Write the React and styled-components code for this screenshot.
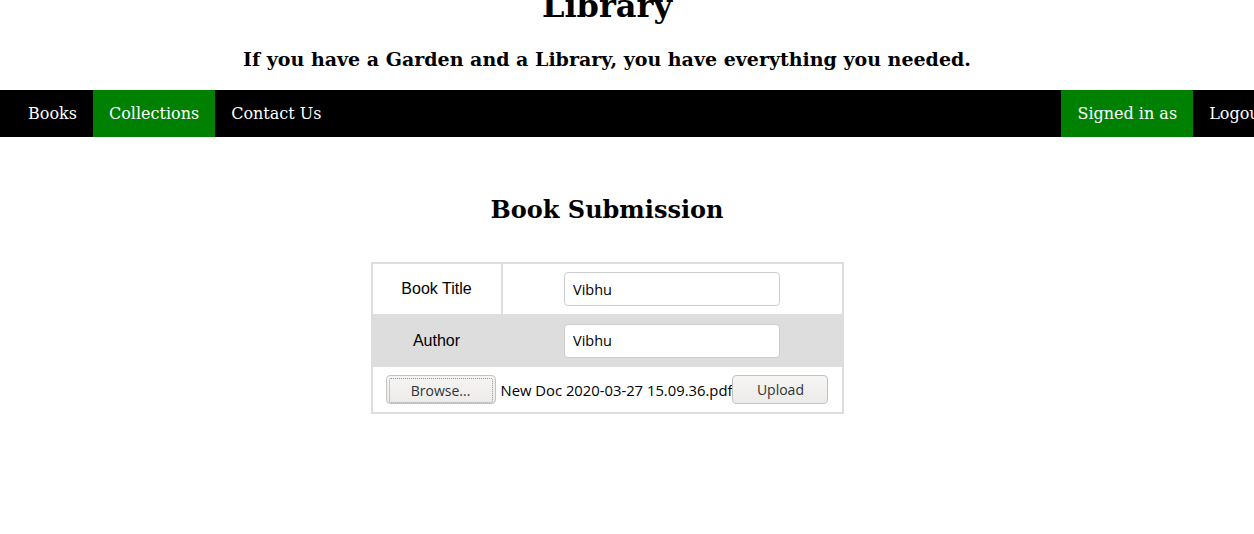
import styled, { createGlobalStyle } from 'styled-components'

const GlobalStyle = createGlobalStyle`
  html, body {
    margin: 0;
    padding: 0;
    background: #fff;
    overflow: hidden;
  }
  body {
    font-family: "DejaVu Serif", serif;
    color: #000;
  }
`;

const App = () => {
    return (
        <>
            <GlobalStyle />
            <Header>
                <Title>Library</Title>
                <Tagline>If you have a Garden and a Library, you have everything you needed.</Tagline>
            </Header>

            <NavBar>
                <NavGroup>
                    <NavItem>Books</NavItem>
                    <NavItem active>Collections</NavItem>
                    <NavItem>Contact Us</NavItem>
                </NavGroup>
                <NavGroup right>
                    <NavItem active>Signed in as</NavItem>
                    <NavItem>Logout</NavItem>
                </NavGroup>
            </NavBar>

            <Main>
                <Heading>Book Submission</Heading>
                <FormTable>
                    <tbody>
                        <Row height={50}>
                            <LabelCell divider>Book Title</LabelCell>
                            <InputCell>
                                <TextInput defaultValue="Vibhu" />
                            </InputCell>
                        </Row>
                        <Row height={53} shaded>
                            <LabelCell>Author</LabelCell>
                            <InputCell>
                                <TextInput defaultValue="Vibhu" />
                            </InputCell>
                        </Row>
                        <Row height={45}>
                            <td colSpan={2}>
                                <UploadLine>
                                    <BrowseButton type="button">
                                        <span>Browse...</span>
                                    </BrowseButton>
                                    <FileName>New Doc 2020-03-27 15.09.36.pdf</FileName>
                                    <UploadButton type="button">Upload</UploadButton>
                                </UploadLine>
                            </td>
                        </Row>
                    </tbody>
                </FormTable>
            </Main>
        </>
    );
};

// content column is centred on a 1214px wide page
const Header = styled.header`
  width: 1214px;
  text-align: center;
  margin-top: -12px;
`;

const Title = styled.h1`
  margin: 0;
  font-size: 32px;
  font-weight: bold;
  line-height: 37px;
`;

const Tagline = styled.h3`
  margin: 23px 0 0;
  font-size: 19px;
  font-weight: bold;
  line-height: 22px;
`;

const NavBar = styled.nav`
  margin-top: 20px;
  height: 47px;
  background: #000;
  display: flex;
  justify-content: space-between;
  padding-left: 12px;
`;

const NavGroup = styled.div`
  display: flex;
  margin-right: ${(p) => (p.right ? '-28px' : '0')};
`;

const NavItem = styled.a`
  display: flex;
  align-items: center;
  padding: 0 16px;
  font-size: 16px;
  color: #fff;
  background: ${(p) => (p.active ? '#008000' : 'transparent')};
  white-space: nowrap;
  cursor: pointer;
`;

const Main = styled.main`
  width: 1214px;
  display: flex;
  flex-direction: column;
  align-items: center;
`;

const Heading = styled.h2`
  margin: 59px 0 0;
  font-size: 24px;
  line-height: 28px;
  font-weight: bold;
`;

const FormTable = styled.table`
  margin-top: 38px;
  width: 473px;
  border: 2px solid #ddd;
  border-collapse: separate;
  border-spacing: 0;
  font-family: "Liberation Sans", Arial, sans-serif;
  font-size: 16px;
  td {
    padding: 0;
    box-sizing: border-box;
  }
`;

const Row = styled.tr`
  height: ${(p) => p.height}px;
  background: ${(p) => (p.shaded ? '#ddd' : '#fff')};
`;

const LabelCell = styled.td`
  width: 130px;
  text-align: center;
  border-right: 2px solid ${(p) => (p.divider ? '#ddd' : 'transparent')};
`;

const InputCell = styled.td`
  text-align: center;
`;

const TextInput = styled.input`
  box-sizing: border-box;
  width: 216px;
  height: 34px;
  padding: 0 8px;
  border: 1px solid #ccc;
  border-radius: 4px;
  background: #fff;
  font-family: "Open Sans", sans-serif;
  font-size: 14.5px;
  color: #000;
  outline: none;
`;

const UploadLine = styled.div`
  display: flex;
  align-items: center;
  justify-content: center;
`;

const ButtonBase = styled.button`
  box-sizing: border-box;
  height: 29px;
  border: 1px solid #c3c3c3;
  border-radius: 4px;
  background: linear-gradient(#f6f5f4, #edebe9);
  font-family: "Open Sans", sans-serif;
  font-size: 14px;
  color: #2e3436;
  cursor: pointer;
`;

const BrowseButton = styled(ButtonBase)`
  width: 110px;
  padding: 2px;
  span {
    display: flex;
    align-items: center;
    justify-content: center;
    height: 100%;
    border: 1px dotted #999;
    border-radius: 2px;
  }
`;

const FileName = styled.span`
  margin-left: 5px;
  font-family: "Open Sans", sans-serif;
  font-size: 14.8px;
  color: #000;
  white-space: nowrap;
`;

const UploadButton = styled(ButtonBase)`
  width: 96px;
`;

export default App
